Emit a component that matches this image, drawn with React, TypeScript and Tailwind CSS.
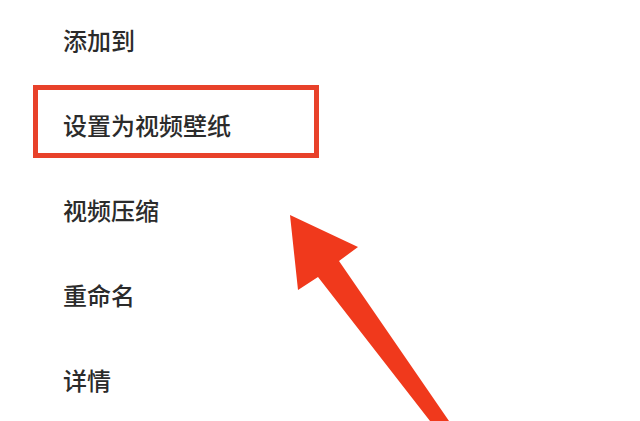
import React from 'react';

const items: string[] = ['添加到', '设置为视频壁纸', '视频压缩', '重命名', '详情'];

export default function App() {
  return (
    <div className="relative w-[640px] h-[421px] overflow-hidden bg-white">
      <ul className="flex flex-col pl-[63px] -mt-[3px]">
        {items.map((label) => (
          <li
            key={label}
            className="flex items-center h-[85px] text-[24px] font-medium text-[#2b2b2b]"
            style={{ fontFamily: '"Noto Sans CJK SC", "Noto Sans", sans-serif' }}
          >
            {label}
          </li>
        ))}
      </ul>

      {/* highlight box */}
      <div className="absolute left-[33px] top-[85px] w-[286px] h-[73px] border-[5px] border-[#e8412a]" />

      {/* arrow */}
      <svg className="absolute left-0 top-0" width="640" height="421" viewBox="0 0 640 421">
        <polygon
          points="290,215 358,247 339,261 449,421 430,421 318,277 298,290"
          fill="#f0391c"
        />
      </svg>
    </div>
  );
}
